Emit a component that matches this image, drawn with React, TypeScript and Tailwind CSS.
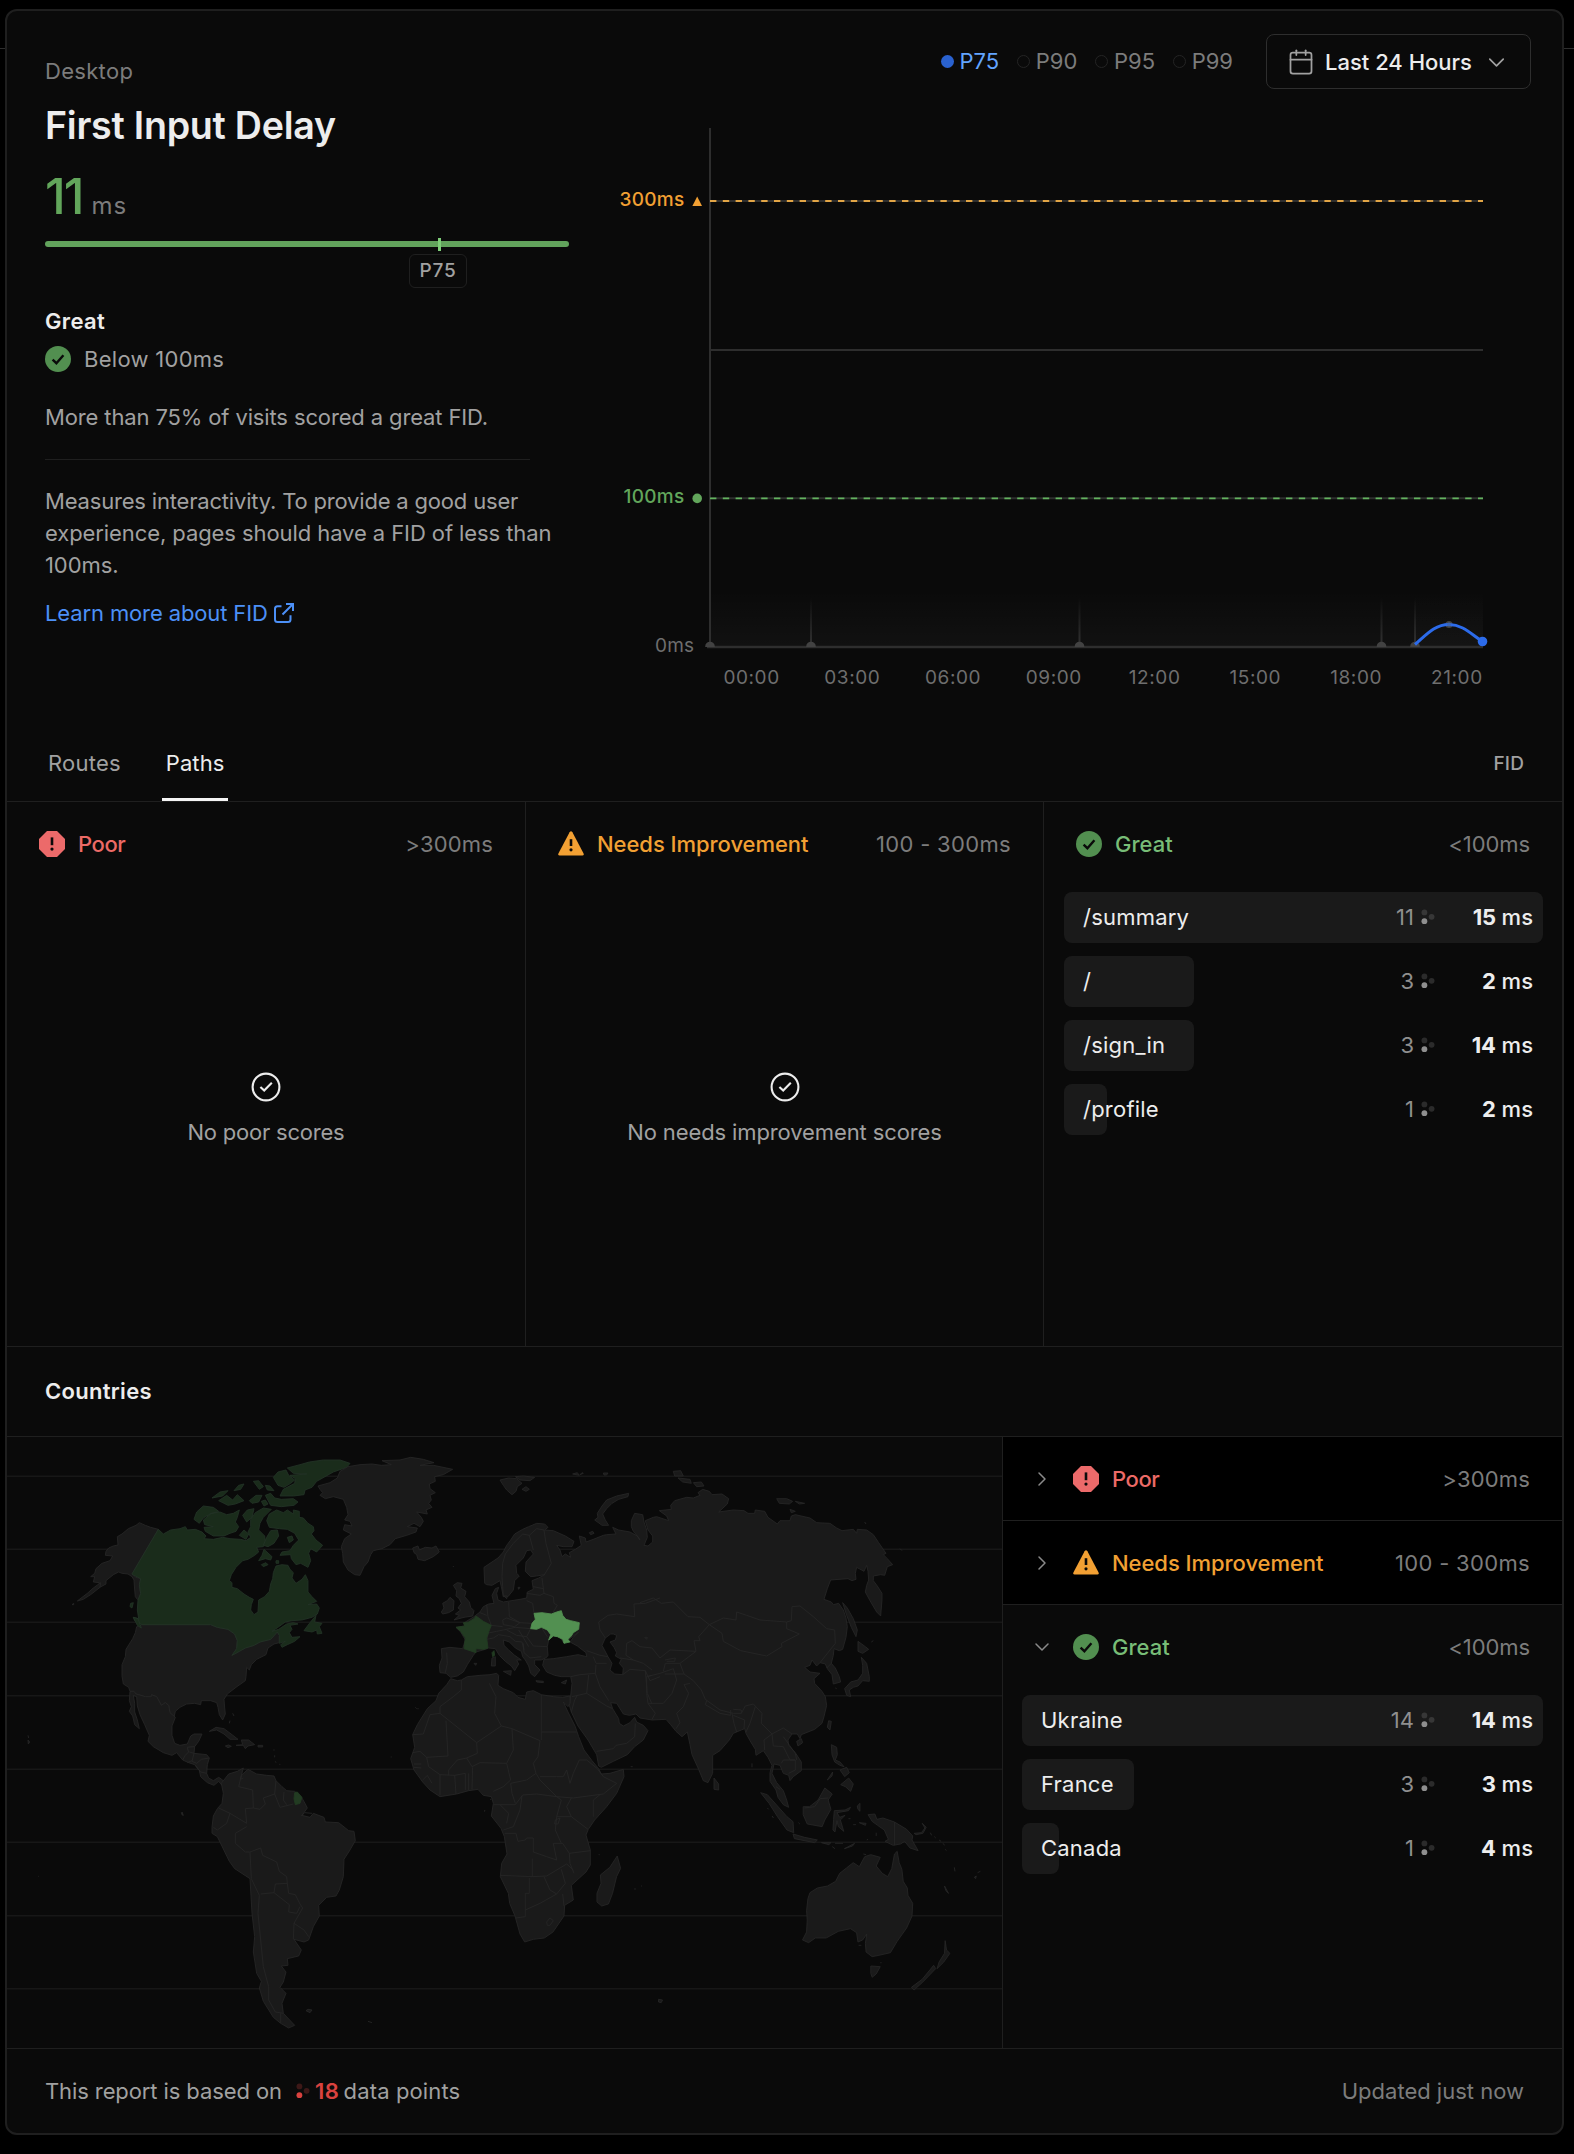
import React from "react";
import { Calendar, ChevronDown, ChevronRight } from "lucide-react";

type Level = "poor" | "needs" | "great";

function CheckBadge() {
  return (
    <svg viewBox="0 0 26 26" className="size-[26px] shrink-0">
      <circle cx="13" cy="13" r="13" fill="#528f50" />
      <path d="M7.6 13.6 L11.4 17.2 L18.4 9.2" fill="none" stroke="#0a0a0a" strokeWidth="2.4" />
    </svg>
  );
}

function LevelIcon({ level }: { level: Level }) {
  if (level === "great") return <CheckBadge />;
  if (level === "poor")
    return (
      <svg viewBox="0 0 26 26" className="size-[26px] shrink-0">
        <path d="M8 0 H18 L26 8 V18 L18 26 H8 L0 18 V8 Z" fill="#ec6a6a" />
        <path d="M13 6.4 V14.2" stroke="#0a0a0a" strokeWidth="2.6" />
        <circle cx="13" cy="18.1" r="1.6" fill="#0a0a0a" />
      </svg>
    );
  return (
    <svg viewBox="0 0 26 26" className="size-[26px] shrink-0">
      <path d="M11.6 1.2 Q13 -0.6 14.4 1.2 L25.6 22.6 Q26 24.6 24.4 24.6 H1.6 Q0 24.6 0.4 22.6 Z" fill="#f2a033" />
      <path d="M13 8.2 V15" stroke="#0a0a0a" strokeWidth="2.6" />
      <circle cx="13" cy="18.8" r="1.6" fill="#0a0a0a" />
    </svg>
  );
}

const LEVELS = {
  poor: { label: "Poor", range: ">300ms", cls: "text-[#ec6a66] tracking-[-0.02em]", rangeCls: "tracking-[0.008em]" },
  needs: { label: "Needs Improvement", range: "100 - 300ms", cls: "text-[#f2a033] tracking-[-0.002em]", rangeCls: "tracking-[0.015em]" },
  great: { label: "Great", range: "<100ms", cls: "text-[#78bd77]", rangeCls: "tracking-[-0.004em]" },
};

function LevelHeader({ level, chevron }: { level: Level; chevron?: "right" | "down" }) {
  const l = LEVELS[level];
  const height = chevron === "right" ? "h-[83px]" : "h-[84px]";
  return (
    <div className={`flex items-center pr-8 ${height} ${chevron ? "pl-[27px]" : "pl-8"}`}>
      {chevron === "right" && <ChevronRight size={24} strokeWidth={1.5} className="mr-[19px] text-[#8a8a8a]" />}
      {chevron === "down" && <ChevronDown size={24} strokeWidth={1.5} className="mr-[19px] text-[#8a8a8a]" />}
      <LevelIcon level={level} />
      <span className={`ml-[13px] font-medium ${l.cls}`}>{l.label}</span>
      <span className={`ml-auto text-[#7c7c7c] ${l.rangeCls}`}>{l.range}</span>
    </div>
  );
}

function Dots({ className }: { className: string }) {
  return (
    <svg viewBox="0 0 14 16" className={`h-4 w-3.5 ${className}`} fill="currentColor">
      <circle cx="3.4" cy="3.4" r="2.9" opacity="0.25" />
      <circle cx="10.6" cy="7.8" r="2.9" opacity="0.25" />
      <circle cx="3.4" cy="12.2" r="2.9" />
    </svg>
  );
}

type Row = { name: string; count: string; ms: string; width: number };

function Rows({ rows }: { rows: Row[] }) {
  return (
    <div className="mt-1.5 flex flex-col gap-[13px]">
      {rows.map((r) => (
        <div key={r.name} className="relative flex h-[51px] items-center pb-0.5 pl-[19px] pr-[10px]">
          <div className="absolute inset-y-0 left-0 rounded-lg bg-[#1a1a1a]" style={{ width: r.width }} />
          <span className="relative tracking-[0.01em] text-[#ededed]">{r.name}</span>
          <span className="relative ml-auto text-[#8f8f8f]">{r.count}</span>
          <Dots className="relative ml-[7px] text-[#8f8f8f]" />
          <span className="relative w-[98px] text-right font-medium text-[#ededed]">
            <span className="font-bold tracking-[-0.01em]">{r.ms}</span> ms
          </span>
        </div>
      ))}
    </div>
  );
}

function EmptyState({ text, cls }: { text: string; cls: string }) {
  return (
    <div className="flex flex-col items-center pt-[186px]">
      <svg viewBox="0 0 30 30" className="size-[30px]" fill="none" stroke="#ededed" strokeWidth="2.1">
        <circle cx="15" cy="15" r="13.4" />
        <path d="M9.4 15 L13.2 18.6 L20.8 10.8" />
      </svg>
      <span className={`mt-[14px] leading-8 text-[#a1a1a1] ${cls}`}>{text}</span>
    </div>
  );
}

const TIMES = ["00:00", "03:00", "06:00", "09:00", "12:00", "15:00", "18:00", "21:00"];

function DelayChart() {
  return (
    <svg viewBox="607 110 956 590" className="h-[590px] w-[956px]" fontFamily="Inter, sans-serif" fontSize="19">
      <defs>
        <linearGradient id="fade" x1="0" y1="0" x2="0" y2="1">
          <stop offset="0" stopColor="#fff" stopOpacity="0" />
          <stop offset="1" stopColor="#fff" stopOpacity="0.03" />
        </linearGradient>
        <linearGradient id="tick" gradientUnits="userSpaceOnUse" x1="0" y1="598" x2="0" y2="647">
          <stop offset="0" stopColor="#3a3a3a" stopOpacity="0" />
          <stop offset="1" stopColor="#3a3a3a" stopOpacity="0.8" />
        </linearGradient>
        <clipPath id="aboveAxis">
          <rect x="690" y="560" width="800" height="87" />
        </clipPath>
      </defs>
      <rect x="711" y="590" width="772" height="57" fill="url(#fade)" />
      <rect x="1415" y="590" width="68" height="57" fill="url(#fade)" opacity="0.5" />
      <g stroke="#2e2e2e" strokeWidth="2" fill="none">
        <path d="M710 128 V647" />
        <path d="M707 647 H1483" strokeWidth="2.4" />
        <path d="M710 350 H1483" />
        <path d="M710 201 H1483" />
        <path d="M710 498.3 H1483" />
      </g>
      <g strokeWidth="1.8" strokeDasharray="6.4 6.4">
        <path d="M710 201 H1483" stroke="#e2a546" />
        <path d="M710 498.3 H1483" stroke="#62b35e" />
      </g>
      {[811, 1079.5, 1381.5, 1415].map((x) => (
        <rect key={x} x={x - 1} y="598" width="2" height="49" fill="url(#tick)" />
      ))}
      <g clipPath="url(#aboveAxis)" fill="#424242">
        {[710, 811, 1079.5, 1381.5, 1415].map((x) => (
          <circle key={x} cx={x} cy="646.5" r="4.8" />
        ))}
      </g>
      <circle cx="1449" cy="624.5" r="3.6" fill="#424242" />
      <path d="M1415 644.5 C1427 634 1435 624.5 1449 624.5 C1463 624.5 1472 635 1482.5 641.5" fill="none" stroke="#2c6bea" strokeWidth="3" />
      <circle cx="1449" cy="624.5" r="2" fill="#3c66b4" />
      <circle cx="1482.5" cy="641.5" r="4.8" fill="#2c6bea" />
      <text x="619.5" y="206.3" fill="#f2a033" fontWeight="500" letterSpacing="0.3">300ms</text>
      <path d="M697.2 196.5 L702 206 H692.4 Z" fill="#f2a033" />
      <text x="623.5" y="503.3" fill="#62a65b" fontWeight="500" letterSpacing="0.3">100ms</text>
      <circle cx="697.2" cy="498.4" r="4.8" fill="#62a65b" />
      <text x="655" y="652.3" fill="#6e6e6e" letterSpacing="0.2">0ms</text>
      <g fill="#6e6e6e" textAnchor="middle" letterSpacing="0.6">
        {TIMES.map((t, i) => (
          <text key={t} x={751.6 + i * 100.75} y="684">{t}</text>
        ))}
      </g>
    </svg>
  );
}

const GRID = [1476.3, 1549.3, 1622.3, 1695.7, 1769.3, 1842.3, 1915.7, 1988.7];

function WorldMap() {
  return (
    <svg viewBox="7 1437 995 611" className="block h-[611px] w-[995px]">
      <g stroke="#171717" strokeWidth="1.4">
        {GRID.map((y) => (
          <path key={y} d={`M7 ${y} H1002`} />
        ))}
      </g>
      <g transform="translate(0 1430) scale(0.33333)" fill="#1a1a1a" stroke="#262626" strokeWidth="2.6" strokeLinejoin="round">
        {/* North and Central America */}
        <path d="M475 298 L452 292 436 286 418 278 408 286 385 296 366 312 352 320 354 345 340 348 326 354 318 364 316 376 338 378 330 392 306 400 288 416 284 430 272 440 284 440 280 456 298 458 296 474 318 462 318 452 340 434 356 426 366 430 384 432 396 440 402 450 404 480 406 500 412 508 420 510 422 490 418 470 422 446 408 442 396 432 Z" />
        <path d="M302 458 L280 474 262 490 232 513 250 508 272 494 300 472 Z M216 524 l5 -4 v4 z" />
        <path d="M426 584 L632 584 652 592 684 598 704 612 712 632 710 656 696 676 736 654 762 646 780 636 812 628 832 606 838 616 838 638 822 642 804 654 798 674 770 688 754 704 748 720 740 712 738 740 736 752 708 772 682 792 672 808 674 834 676 852 668 870 658 854 654 832 650 818 632 812 604 812 602 824 584 820 560 822 540 832 526 844 522 862 510 848 506 826 496 818 484 826 470 800 454 794 454 800 436 800 408 792 402 784 390 784 386 772 370 762 366 738 366 704 376 680 378 658 398 626 406 608 410 590 Z" />
        <path d="M390 784 L402 784 408 792 436 800 454 800 454 794 470 800 484 826 496 818 506 826 510 848 526 862 516 888 516 916 524 940 540 946 562 942 572 918 582 912 606 912 596 934 584 950 562 952 566 966 556 976 548 990 530 968 516 976 490 968 460 950 444 934 448 916 434 884 420 854 412 828 410 800 400 796 404 820 404 846 412 870 418 896 404 884 398 858 388 844 394 830 388 812 Z" />
        <path d="M548 990 L556 976 566 966 562 952 584 950 582 970 620 974 628 984 622 1004 620 1030 626 1044 640 1052 656 1042 668 1050 676 1064 666 1066 656 1054 642 1066 622 1058 602 1040 598 1022 584 1004 566 998 Z" />
        <path d="M582 970 L576 994 590 1000 604 988 628 984 M586 1006 L602 1026 620 1030 M582 970 L568 966 M562 998 L576 992" fill="none" />
        <path d="M628 904 L648 892 672 896 696 914 714 928 690 928 672 912 650 900 Z M708 946 L728 944 724 930 746 930 764 944 744 948 736 956 730 946 Z M676 948 l10 -3 8 4 -10 4 z M774 946 h14 v5 h-14 z M698 850 l4 8 M690 872 l-2 8 M84 916 l2 8 M84 930 l5 6 -4 6 z M822 958v4 M824 976v6 M838 1003h3 M826 994l2 4 M546 1146v8l4 2z" />
        {/* Canada */}
        <g fill="#1a2c1b" stroke="#233326">
          <path d="M475 298 L490 312 512 300 540 296 556 290 562 300 586 298 606 306 618 318 612 326 640 328 668 322 690 326 722 328 738 332 752 322 744 306 752 290 752 268 766 248 790 234 814 238 790 262 780 280 776 300 794 318 796 334 790 350 770 352 776 366 764 376 744 388 728 392 708 412 694 434 688 452 696 458 696 472 712 476 732 492 748 502 760 508 754 524 752 540 762 554 774 546 776 510 794 500 808 484 812 462 818 446 820 428 828 408 846 404 864 406 870 418 880 428 876 444 888 460 906 448 916 434 924 452 924 486 936 500 950 514 924 524 950 522 958 534 952 552 936 562 906 570 876 572 856 576 834 592 816 604 836 598 860 582 880 578 894 582 870 586 876 598 868 608 876 622 900 620 884 634 862 644 846 652 842 644 856 634 838 640 838 616 832 606 812 628 780 636 762 646 736 654 718 664 696 676 710 656 712 632 704 612 684 598 652 592 632 584 426 584 404 572 400 562 416 566 412 540 414 510 422 490 418 464 422 446 402 436 396 432 Z" />
          <path d="M862 114 L900 104 928 96 970 90 1020 90 1050 100 1040 112 1000 126 975 140 950 154 936 172 915 180 912 194 880 198 840 198 850 178 884 160 886 146 870 136 920 132 880 130 Z" />
          <path d="M820 142 L834 126 858 120 866 136 884 150 872 160 852 172 834 166 Z M796 196 L812 190 824 204 844 208 880 206 894 216 882 226 844 230 812 226 Z" />
          <path d="M636 204 L660 186 684 182 668 198 Z M656 212 L680 196 698 210 712 194 732 212 706 222 684 226 Z M702 182 L716 166 732 162 722 178 Z M760 154 L776 152 790 170 778 178 Z M796 166 l14 2 12 14 -20 -2 z M748 212 L768 196 786 196 776 216 756 220 Z M784 214 l12 -4 8 12 -12 6 z" />
          <path d="M582 268 L590 246 610 228 640 232 656 244 630 252 610 264 598 280 Z M610 270 L634 250 660 246 680 254 700 250 718 240 712 262 706 276 716 290 708 304 690 310 672 318 640 318 616 304 612 292 640 290 614 284 Z M728 256 L742 240 762 236 756 262 740 276 Z M718 316 L732 300 746 312 738 328 Z" />
          <path d="M800 272 L808 252 830 240 850 248 862 240 880 252 880 240 898 244 898 262 910 264 924 280 940 290 942 302 934 312 948 330 968 346 950 366 932 356 926 370 932 392 924 412 902 400 888 404 874 386 872 374 840 376 846 366 870 362 880 346 896 330 884 310 862 298 838 296 808 292 Z" />
          <path d="M776 392 L786 376 792 358 816 380 812 390 796 386 Z M790 346 L800 322 812 302 832 300 836 318 822 340 804 350 Z M862 322 L876 318 880 330 868 338 Z M784 404 l14 -6 6 6 -14 6 z M828 392 h8 v8 h-8 z" />
          <path d="M912 602 L930 578 948 556 944 576 966 580 958 590 966 610 952 612 950 600 936 606 Z M400 562 L414 566 424 594 412 586 Z M392 520 l8 -2 -4 16 -6 -4 z" />
        </g>
        {/* South America */}
        <g transform="translate(0 1050)">
          <path d="M664 10 L686 -18 712 -26 730 -36 724 -14 744 -32 770 -18 800 -14 822 -12 828 2 846 20 860 32 884 34 906 54 916 72 922 84 906 106 930 112 940 100 972 112 976 126 1016 128 1046 152 1062 154 1066 182 1050 210 1032 238 1030 290 1018 330 1008 348 980 352 956 376 958 408 940 440 926 480 912 486 882 478 904 510 896 528 862 536 864 556 844 558 858 576 850 606 840 622 858 640 846 670 850 700 884 736 866 744 842 730 820 712 790 664 778 624 784 604 770 580 760 516 764 470 756 400 750 296 704 266 688 244 652 170 636 160 636 142 640 108 652 86 666 70 670 40 Z" />
          <path d="M724 -14 L716 20 758 30 760 84 736 86 740 130 690 100 656 84 M690 100 L680 130 652 150 640 142 M740 140 L706 160 706 190 736 216 750 216 754 296 778 346 774 400 782 480 790 560 806 620 806 660 826 696 850 700 M750 216 L782 204 788 226 830 246 838 274 860 290 862 310 826 312 822 338 782 342 M862 310 L866 340 886 344 900 372 908 384 882 430 880 478 M822 338 L868 374 866 396 890 400 900 380 M882 430 L912 450 926 470 M760 84 L780 88 796 72 790 54 824 42 828 2 M824 42 L840 82 880 72 M852 36 L850 60 860 74 M904 108 L914 98 936 100 M724 -14 L722 -2 730 -6 M842 700 V730" fill="none" />
          <path d="M884 38 L892 36 906 52 900 70 886 74 882 56 Z" fill="#223b22" stroke="#223b22" />
          <path d="M918 692 l6 -4 12 2 -6 8 z M1104 724 l12 4 M544 98 l4 8 M115 289 h2" />
        </g>
        {/* Greenland, Europe, Russia, Asia and Africa */}
        <g transform="translate(1020 0)">
          <path d="M-66 168 L-30 158 -8 144 0 124 24 110 60 104 96 102 124 106 154 104 126 92 180 90 212 82 250 88 282 98 240 106 280 106 300 110 338 118 310 134 284 140 286 154 268 162 270 176 286 188 270 196 274 210 266 220 276 232 258 240 262 252 230 246 244 262 250 274 240 290 222 280 202 290 232 294 228 306 200 316 166 326 150 344 126 356 100 362 92 374 84 396 72 410 60 436 44 434 24 420 10 396 8 370 4 350 14 326 34 312 10 300 14 284 36 288 30 274 14 270 24 254 20 232 10 208 -20 200 -44 206 -60 196 -52 188 -60 178 Z" />
          <path d="M218 354 L234 348 238 360 256 352 276 354 288 348 298 366 280 380 254 392 234 388 230 374 222 368 Z" />
          <path d="M340 466 L352 458 366 460 362 474 378 484 374 500 388 516 392 532 402 542 398 558 372 562 342 570 358 556 346 552 362 540 354 534 364 520 358 506 348 498 350 482 Z M304 546 L312 534 308 520 322 512 330 502 342 512 340 540 326 548 308 552 Z" />
          <path d="M480 150 L506 144 530 146 546 160 532 170 528 184 516 194 500 180 490 166 Z M526 140 L550 138 584 142 570 152 540 150 Z M546 178 l12 -8 10 8 -10 6 z M698 132 l14 -4 6 8 z M720 134 l6 -6 4 2 z M790 129 h14 l-4 6 h-8 z M748 308 l10 -4 4 6 -10 4 z" />
          <path d="M764 270 L774 262 772 250 786 228 800 210 830 198 866 190 864 200 836 208 816 220 800 236 788 252 796 270 806 286 786 286 Z" />
          <path d="M434 460 L432 412 450 400 474 384 490 366 500 346 512 330 524 312 548 298 566 290 590 280 614 282 624 292 614 300 640 302 676 318 702 334 696 350 670 350 650 346 660 360 666 380 676 372 692 382 688 368 706 358 724 346 718 318 736 324 738 336 760 328 790 316 800 314 828 312 818 292 836 300 870 306 892 318 900 330 892 318 880 304 874 290 874 272 884 250 908 254 912 276 920 300 922 322 912 346 924 348 938 336 938 318 924 300 916 272 940 262 950 260 986 272 980 258 958 242 994 238 992 226 1004 212 1040 202 1060 204 1080 196 1074 188 1088 178 1108 184 1116 194 1146 192 1166 206 1162 222 1136 246 1180 240 1212 242 1224 250 1244 250 1246 240 1274 244 1284 262 1312 282 1320 272 1350 272 1354 258 1366 254 1410 264 1430 278 1470 280 1490 294 1506 302 1540 298 1550 310 1552 298 1580 300 1600 314 1616 338 1638 370 1630 374 1642 386 1658 404 1642 410 1634 436 1622 434 1600 438 1600 452 1612 468 1626 490 1626 510 1622 558 1610 546 1590 512 1576 486 1580 466 1586 450 1584 424 1580 406 1572 424 1550 412 1546 430 1548 448 1536 452 1524 446 1472 450 1462 476 1452 508 1474 516 1480 524 1496 520 1510 540 1518 564 1522 590 1518 622 1508 658 1498 662 1482 656 1480 676 1474 700 1486 714 1498 740 1502 756 1480 762 1476 734 1462 716 1456 702 1440 698 1430 708 1416 690 1410 706 1394 712 1410 726 1440 730 1422 746 1424 760 1446 784 1456 800 1460 826 1452 860 1446 880 1424 898 1384 914 1380 926 1372 912 1356 912 1344 930 1346 946 1366 968 1384 996 1384 1022 1360 1040 1350 1052 1346 1036 1330 1030 1320 1006 1302 1002 1296 1030 1310 1058 1330 1082 1340 1110 1346 1132 1330 1124 1314 1102 1308 1080 1290 1054 1290 1028 1296 1006 1284 982 1270 962 1248 976 1246 958 1230 932 1218 910 1214 896 1204 900 1180 910 1168 930 1140 962 1118 976 1118 1030 1104 1058 1090 1052 1076 1018 1056 974 1050 944 1042 906 1026 920 1008 904 992 884 978 868 936 870 900 864 888 852 868 856 850 852 830 820 812 818 818 836 836 866 838 880 850 888 870 878 884 862 890 876 910 886 924 902 910 930 884 950 862 974 820 994 784 1012 776 1008 770 974 744 930 714 888 694 846 688 826 692 798 696 760 692 740 664 740 644 736 620 726 608 706 612 688 640 686 680 680 714 674 740 680 738 668 712 648 690 636 700 622 716 606 672 640 660 620 640 616 626 630 622 650 624 676 620 682 604 690 584 690 584 704 600 720 584 740 572 730 566 708 556 690 548 680 544 664 526 654 508 636 490 630 492 646 506 660 524 676 544 690 530 690 536 702 524 722 514 708 496 694 478 676 466 656 446 654 436 658 408 666 400 676 382 704 370 726 352 738 332 742 318 730 300 728 298 706 306 684 304 656 330 652 368 656 376 630 362 606 348 592 374 588 376 576 402 560 420 546 430 530 446 522 462 520 456 496 466 476 476 472 470 490 474 510 490 516 540 508 560 504 562 486 580 478 576 452 596 444 614 434 590 438 572 440 556 424 558 396 580 372 572 360 560 362 550 384 528 406 530 430 538 438 524 452 520 480 504 500 490 500 486 480 480 452 456 466 440 464 Z" />
          <path d="M820 612 L830 616 826 630 810 636 822 652 830 668 826 678 844 688 838 700 850 714 848 734 824 732 810 720 816 700 804 680 786 646 796 624 812 612 Z" fill="#0a0a0a" />
          <path d="M490 724 L514 722 512 736 Z M456 684 L466 680 466 708 454 708 Z M588 752 l22 2 v4 l-20 -2 z M664 758 L680 750 676 762 Z M402 700 l8 0 -3 6 z M492 498 l10 0 -2 8 z M534 472 l6 0 -4 6 z" />
          {/* borders of Europe and Asia */}
          <g fill="none">
            <path d="M490 500 L488 470 486 440 488 400 496 372 520 340 548 312 568 316 580 360 M568 316 L590 296 612 300 618 340 634 400 612 436 M606 444 L612 490 600 496 560 490 M580 470 L610 476 M612 490 L640 500 642 520 652 526 640 546 M582 550 L578 520 560 512 M506 516 L508 560 540 578 572 580 M440 524 L444 560 454 586 488 590 M488 570 L500 564 540 578 524 590 490 584 Z M440 610 L470 604 490 600 526 592 572 596 560 620 530 616 500 600 M560 620 L580 648 622 650 M550 640 L552 668 570 684 604 680 M510 620 L526 634 546 636 552 660 M320 668 L322 700 316 728 M604 592 L622 620 M536 600 L552 626 566 650 M446 606 L440 628 460 624 476 614 510 620 M420 548 L440 556" />
            <path d="M740 662 L780 676 804 680 M760 680 L768 700 800 700 M692 740 L720 734 766 730 768 704 M766 730 L780 770 806 812 M696 800 L740 790 746 735 M740 790 L800 828 818 836 M770 964 L820 956 828 946 860 940 884 920 886 880 M960 504 L916 520 882 522 884 560 830 552 804 556 776 576 780 600 796 624 M848 734 L870 718 916 722 930 752 960 740 M916 722 L922 790 936 822 M860 640 L858 676 880 690 840 684 M860 640 L876 632 900 650 936 654 960 684 M880 690 L910 700 936 720 M914 622 l8 0 -2 6 z M694 846 L704 810 712 796" />
            <path d="M900 518 L940 504 964 520 1000 516 1044 560 1080 562 1108 584 1076 620 1080 632 1062 632 1068 664 1020 700 1032 732 1060 752 1084 780 1096 808 1140 840 1180 850 1204 850 1216 828 1240 822 1266 850 1264 880 1296 912 1330 894 1356 912 M1108 584 L1150 564 1188 570 1190 546 1220 556 1260 570 1340 576 1354 572 1356 530 1380 528 1420 560 1460 596 1484 600 1486 640 1440 698 M1108 584 L1146 610 1150 634 1202 662 1280 678 1326 650 1324 640 1378 612 1340 596 1340 576" />
            <path d="M1100 812 L1096 824 1140 850 1172 856 1172 840 M1176 850 L1182 880 1190 906 M1212 896 L1214 870 1180 856 M1246 830 L1230 880 1218 906 M1050 760 L1032 764 1046 790 1030 830 1010 850 1020 878 1008 896 M936 736 L920 740 M920 740 L960 730 1000 716 1010 750 996 790 970 820 924 820 946 850 936 868 M920 740 L920 790 924 820 M990 660 L1068 664 M960 684 L990 660 M970 724 L976 700 1020 700 M975 690 L1006 684 1004 694 980 694 M1180 838 L1204 840 1204 850 M1032 732 L974 732" />
            <path d="M1296 912 L1272 930 1274 960 M1296 912 L1300 948 1330 950 1350 990 1366 990 M1330 920 L1366 970 1370 990 M1324 1000 L1330 990 1366 990 1366 1020 1346 1030 M1308 1070 L1320 1078 M1460 714 L1474 700" />
          </g>
          {/* islands of eastern Asia and the Arctic */}
          <path d="M1508 518 L1522 534 1540 566 1552 600 1548 620 1534 592 1520 556 Z M1554 634 L1576 650 1586 658 1568 670 1554 664 Z M1564 682 L1580 700 1588 740 1588 754 1568 752 1554 768 1540 772 1528 780 1532 800 1520 796 1514 776 1532 756 1554 750 1568 730 1568 706 Z M1466 872 L1474 874 1470 900 1462 892 Z M1370 934 L1384 926 1388 938 1374 948 Z M1122 1044 L1136 1062 1136 1080 1122 1078 Z" />
          <path d="M1000 124 L1022 122 1030 138 1004 138 Z M1014 144 L1050 148 1054 160 1028 156 Z M1060 158 L1084 156 1092 168 1070 170 Z M1310 206 L1340 206 1358 214 1348 222 1318 220 Z M1366 214 L1394 220 1378 222 Z M1350 238 l16 6 -12 4 z M1574 276 l4 6 M1680 356 l6 6 M1594 636 l6 -4" />
          <path d="M1474 944 L1490 952 1492 974 1486 990 1500 996 1512 1010 1500 1006 1484 996 1476 974 Z M1500 1020 l20 -8 8 16 -14 12 z M1502 1064 L1526 1044 1540 1062 1532 1084 1516 1070 Z M1462 1050 L1478 1026 1476 1038 Z M1236 1000 v12 M1486 774 l4 2" />
          {/* Africa */}
          <path d="M332 746 L352 752 364 750 382 740 420 736 450 734 470 730 476 736 474 766 490 776 520 788 534 802 556 808 560 786 580 782 604 794 640 800 668 802 690 798 690 820 684 830 670 816 684 846 706 890 716 920 732 960 756 992 776 1016 784 1032 810 1030 850 1018 852 1040 830 1090 800 1130 764 1170 745 1198 738 1215 751 1260 751 1305 738 1326 694 1366 700 1410 674 1426 672 1458 639 1506 613 1524 580 1528 554 1536 540 1512 525 1458 509 1420 505 1390 481 1340 485 1300 501 1272 493 1220 483 1195 454 1158 460 1120 454 1100 430 1096 414 1078 386 1082 350 1092 300 1100 270 1080 248 1056 222 1020 212 986 224 952 218 914 232 884 262 836 288 812 296 790 320 764 Z" />
          <path d="M364 750 L364 780 340 800 300 830 300 850 270 854 250 912 218 914 M300 850 L410 938 484 888 464 850 468 800 448 760 M604 794 V930 M604 906 H710 M484 888 L516 896 600 932 594 980 580 1000 588 1030 M410 938 L412 970 380 984 352 990 326 1020 M318 872 L324 978 260 982 240 964 218 968 M516 896 L520 960 500 1000 420 998 396 1010 380 984 M500 1000 L512 1050 490 1070 460 1084 M512 1060 L516 1090 526 1120 M512 1060 L560 1050 588 1030 600 1050 650 1100 700 1104 790 1092 830 1060 790 1040 772 1016 740 990 718 990 700 1030 690 1060 680 1020 670 1040 650 1040 600 1040" fill="none" />
          <path d="M460 1124 H526 L548 1095 590 1092 650 1100 664 1110 650 1160 646 1200 664 1240 M546 1098 L540 1140 520 1190 490 1200 M480 1124 L506 1150 500 1180 M694 1160 L650 1160 M694 1160 L744 1198 M694 1104 L680 1130 694 1160 M760 1160 V1110 L780 1094 M494 1210 H528 L534 1234 556 1230 560 1224 580 1224 580 1266 620 1280 650 1290 640 1240 668 1240 688 1270 751 1262 M577 1286 V1340 L481 1336 M577 1340 L620 1338 680 1302 700 1320 M568 1344 V1390 L556 1390 V1460 L528 1464 M556 1440 L600 1420 650 1392 676 1360 664 1318 M612 1340 L630 1380 650 1392 M668 1392 L672 1428 M620 1476 l10 -12 10 8 -10 14 -8 0 z M688 1270 L690 1300 702 1330 M646 1170 l14 -6 -6 18 -10 0 z" fill="none" />
          <path d="M222 1012 L244 1014 M248 1050 L262 1036 276 1060 M300 1096 V1034 L344 1036 348 1092 M376 1080 V1030 M386 1080 V1030 M396 1078 L398 1012 M260 982 L266 1010 300 1034 M326 1020 L326 1036 M344 1036 L376 1030 M222 1002 H244 M432 1142 h4 M450 1108 h4 M226 832 l4 4 M234 834v4 M152 981h3 M872 1010h6 M340 408v3" fill="none" />
          <path d="M348 592 L374 588 370 578 386 576 402 566 408 558 430 574 454 586 446 606 440 624 444 654 432 658 408 656 408 668 372 656 376 624 362 604 Z M456 668 l6 -6 2 14 -6 4 z" fill="#223b22" stroke="#223b22" />
          <path d="M572 596 L576 580 586 568 582 550 606 548 634 552 650 546 664 542 668 556 678 568 692 572 718 578 716 598 700 608 694 618 684 628 690 636 672 640 668 628 652 620 640 618 626 630 632 614 622 600 604 592 590 598 Z" fill="#529051" stroke="#529051" />
        </g>
        {/* Oceania and the Indian Ocean */}
        <g transform="translate(1440 1050) scale(1.0142 1)">
          <path d="M406 228 L416 265 404 290 392 340 380 372 360 378 346 366 346 340 358 310 356 285 384 262 Z" />
          <path d="M830 38 L850 44 880 78 908 110 926 125 928 158 908 150 880 110 855 70 Z M926 162 L960 172 998 180 990 188 930 176 Z M956 80 L975 80 1000 60 1020 24 1042 42 1030 60 1038 88 1020 120 1012 140 968 132 956 104 Z" />
          <path d="M960 84 L990 80 1006 56 1030 54" fill="none" />
          <path d="M1048 92 L1080 90 1096 82 1090 92 1056 98 1064 112 1080 106 1066 120 1076 154 1060 140 1056 122 1050 156 1044 150 1046 118 Z M1116 78 l8 -8 v24 l-6 -6 z M1122 128 l20 2 -2 6 z M1104 134 h8 M1090 116 h6 M1010 188 l28 0 -6 6 z M1050 190 h24 M1078 206 l30 -16 -6 8 z M1042 200 l8 6 M1172 158 v10 M1144 180 l4 -2 M850 84 l4 4 M864 108 l4 6 M942 128 l4 4 M1134 222 l8 2" />
          <path d="M1148 104 L1168 102 1174 118 1192 114 1226 126 1262 148 1280 168 1278 180 1296 212 1272 204 1256 184 1244 192 1222 196 1198 184 1208 178 1196 150 1176 136 1160 124 Z M1226 126 V196" />
          <path d="M1284 160 L1306 158 1316 144 1308 130 1320 142 1310 160 1290 164 Z M1332 158 l4 8 M1344 170 l4 4 M1358 180 l6 4 M1370 190 l4 6 M1376 208 l4 4 M1403 262 l2 12 M1374 318 L1386 340 1378 332 Z M1462 292 l6 -4 -2 8 z M1472 278 l8 -4" />
          <path d="M966 392 L970 356 976 338 998 324 1028 318 1052 304 1064 280 1084 264 1104 248 1122 260 1138 230 1156 224 1184 232 1172 258 1190 280 1206 290 1218 266 1226 222 1234 214 1240 248 1248 268 1252 304 1264 324 1266 346 1280 370 1278 408 1262 444 1234 484 1214 518 1180 526 1160 530 1142 516 1140 490 1144 462 1132 480 1118 486 1114 458 1096 446 1060 454 1024 474 992 474 972 488 954 480 966 456 968 420 Z" />
          <path d="M1156 558 L1184 560 1172 582 1160 592 1156 580 Z M1376 482 L1380 510 1390 520 1372 546 1352 566 1358 546 1374 520 Z M1342 556 L1348 566 1310 606 1284 630 1276 622 1308 598 Z M1120 496 h8 M1186 546 v4 M528 658 l12 2 -4 8 -8 -2 z M456 327 h5 M476 318 h3 M351 224h3 M13 94h2" />
        </g>
      </g>
    </svg>
  );
}

const PERCENTILES = ["P75", "P90", "P95", "P99"];

const PATHS: Row[] = [
  { name: "/summary", count: "11", ms: "15", width: 479 },
  { name: "/", count: "3", ms: "2", width: 130 },
  { name: "/sign_in", count: "3", ms: "14", width: 130 },
  { name: "/profile", count: "1", ms: "2", width: 43 },
];

const COUNTRIES: Row[] = [
  { name: "Ukraine", count: "14", ms: "14", width: 521 },
  { name: "France", count: "3", ms: "3", width: 112 },
  { name: "Canada", count: "1", ms: "4", width: 37 },
];

export default function App() {
  return (
    <div className="relative h-[2154px] w-[1574px] bg-black pl-[5px] pt-[9px] font-['Inter',sans-serif] text-[22px] leading-8 text-[#a1a1a1]">
      <div className="absolute left-0 top-12 h-px w-full bg-[#2e2e2e]" />
      <div className="relative h-[2126px] w-[1559px] overflow-hidden rounded-xl border-2 border-[#1f1f1f] bg-[#0a0a0a]">
        {/* metric summary and chart */}
        <div className="flex h-[716px]">
          <div className="w-[593px] pl-[38px] pt-11">
            <div className="tracking-[0.014em] text-[#7c7c7c]">Desktop</div>
            <h1 className="mt-[13px] text-[37.6px] font-semibold leading-[51px] tracking-[-0.0066em] text-[#ededed]">First Input Delay</h1>
            <div className="mt-[14px] flex h-[62px] items-baseline leading-[62px]">
              <span className="text-[50px] font-medium tracking-[-0.041em] text-[#62a65b]">11</span>
              <span className="ml-[9px] text-[24px] tracking-[0.04em] text-[#7c7c7c]">ms</span>
            </div>
            <div className="relative mt-[14px] h-1.5 w-[524px] rounded-full bg-[#62a35c]">
              <div className="absolute -top-[3px] left-[393px] h-[13px] w-[3px] bg-[#7fcf79]" />
              <div className="absolute left-[364px] top-[13px] flex h-[34px] w-[58px] items-center justify-center rounded-md border border-[#1f1f1f] text-[19px] font-medium tracking-[0.04em]">P75</div>
            </div>
            <div className="mt-[58px] font-semibold tracking-[0.016em] text-[#ededed]">Great</div>
            <div className="mt-1.5 flex items-center gap-[13px]">
              <CheckBadge />
              <span className="tracking-[0.013em]">Below 100ms</span>
            </div>
            <div className="mt-[26px] tracking-[-0.006em]">More than 75% of visits scored a great FID.</div>
            <div className="mt-[26px] h-px w-[485px] bg-[#1f1f1f]" />
            <p className="mt-[25px]">
              <span className="block tracking-[-0.0083em]">Measures interactivity. To provide a good user</span>
              <span className="block tracking-[-0.0038em]">experience, pages should have a FID of less than</span>
              <span className="block tracking-[-0.004em]">100ms.</span>
            </p>
            <a className="mt-4 flex items-center gap-[5px] text-[#4c90f7]">
              <span className="tracking-[-0.0056em]">Learn more about FID</span>
              <svg viewBox="0 0 22 22" className="size-[22px]" fill="none" stroke="currentColor" strokeWidth="2">
                <path d="M13 2 H20 V9 M20 2 L9.5 12.5 M8.5 4.2 H4.5 Q2 4.2 2 6.7 V17.5 Q2 20 4.5 20 H15 Q17.5 20 17.5 17.5 V13.2" />
              </svg>
            </a>
          </div>
          <div className="w-[962px]">
            <div className="flex h-[99px] items-start justify-end pr-[31px] pt-[23px]">
              <div className="mr-[33px] flex items-center gap-[17.6px] pt-[11px]">
                {PERCENTILES.map((p, i) => (
                  <div key={p} className="flex items-center gap-1.5">
                    <span className={i === 0 ? "size-[13px] rounded-full bg-[#2a62d0]" : "size-[13px] rounded-full border border-[#242424]"} />
                    <span className={i === 0 ? "text-[#62a4ff]" : "text-[#7c7c7c]"}>{p}</span>
                  </div>
                ))}
              </div>
              <div className="flex h-[55px] w-[265px] items-center rounded-lg border-[1.5px] border-[#2e2e2e] pl-5 pt-px">
                <Calendar size={28} strokeWidth={1.5} className="text-[#a1a1a1]" />
                <span className="ml-[10px] font-medium text-[#ededed]">Last 24 Hours</span>
                <ChevronDown size={27} strokeWidth={1.5} className="ml-[11px] text-[#a1a1a1]" />
              </div>
            </div>
            <div className="pl-[7px]">
              <DelayChart />
            </div>
          </div>
        </div>

        {/* tabs */}
        <div className="flex h-[75px] border-b border-[#1f1f1f] pl-[38px] pr-[38px]">
          <div className="mr-[37px] mt-5 pl-[3px] pr-1 tracking-[0.01em]">Routes</div>
          <div className="flex h-[74px] flex-col border-b-[3px] border-[#f4f4f4] px-1 pt-5 tracking-[0.004em] text-[#ededed]">Paths</div>
          <div className="ml-auto mt-[21px] text-[19px] font-medium tracking-[0.006em]">FID</div>
        </div>

        {/* score columns */}
        <div className="flex h-[545px] border-b border-[#1f1f1f]">
          <div className="w-[519px] border-r border-[#1f1f1f]">
            <LevelHeader level="poor" />
            <EmptyState text="No poor scores" cls="tracking-[-0.0098em]" />
          </div>
          <div className="w-[518px] border-r border-[#1f1f1f]">
            <LevelHeader level="needs" />
            <EmptyState text="No needs improvement scores" cls="tracking-[-0.0052em]" />
          </div>
          <div className="w-[518px]">
            <LevelHeader level="great" />
            <div className="pl-5 pr-[19px]">
              <Rows rows={PATHS} />
            </div>
          </div>
        </div>

        {/* countries */}
        <div className="flex h-[90px] items-center border-b border-[#1f1f1f] pb-0.5 pl-[38px] font-semibold tracking-[0.014em] text-[#ededed]">Countries</div>
        <div className="flex h-[612px] border-b border-[#1f1f1f]">
          <div className="w-[996px] border-r border-[#1f1f1f]">
            <WorldMap />
          </div>
          <div className="w-[559px]">
            <div className="border-b border-[#1f1f1f] bg-black">
              <LevelHeader level="poor" chevron="right" />
            </div>
            <div className="border-b border-[#1f1f1f] bg-black">
              <LevelHeader level="needs" chevron="right" />
            </div>
            <LevelHeader level="great" chevron="down" />
            <div className="pl-[19px] pr-[19px]">
              <Rows rows={COUNTRIES} />
            </div>
          </div>
        </div>

        {/* footer */}
        <div className="flex h-[84px] items-center pl-[38px] pr-[38px]">
          <span className="tracking-[-0.0046em]">This report is based on</span>
          <Dots className="ml-[14px] text-[#d9423f]" />
          <span className="ml-[5px] font-semibold tracking-[0.03em] text-[#d9423f]">18</span>
          <span className="ml-1 tracking-[0.006em]">data points</span>
          <span className="ml-auto text-[#7c7c7c]">Updated just now</span>
        </div>
      </div>
    </div>
  );
}
